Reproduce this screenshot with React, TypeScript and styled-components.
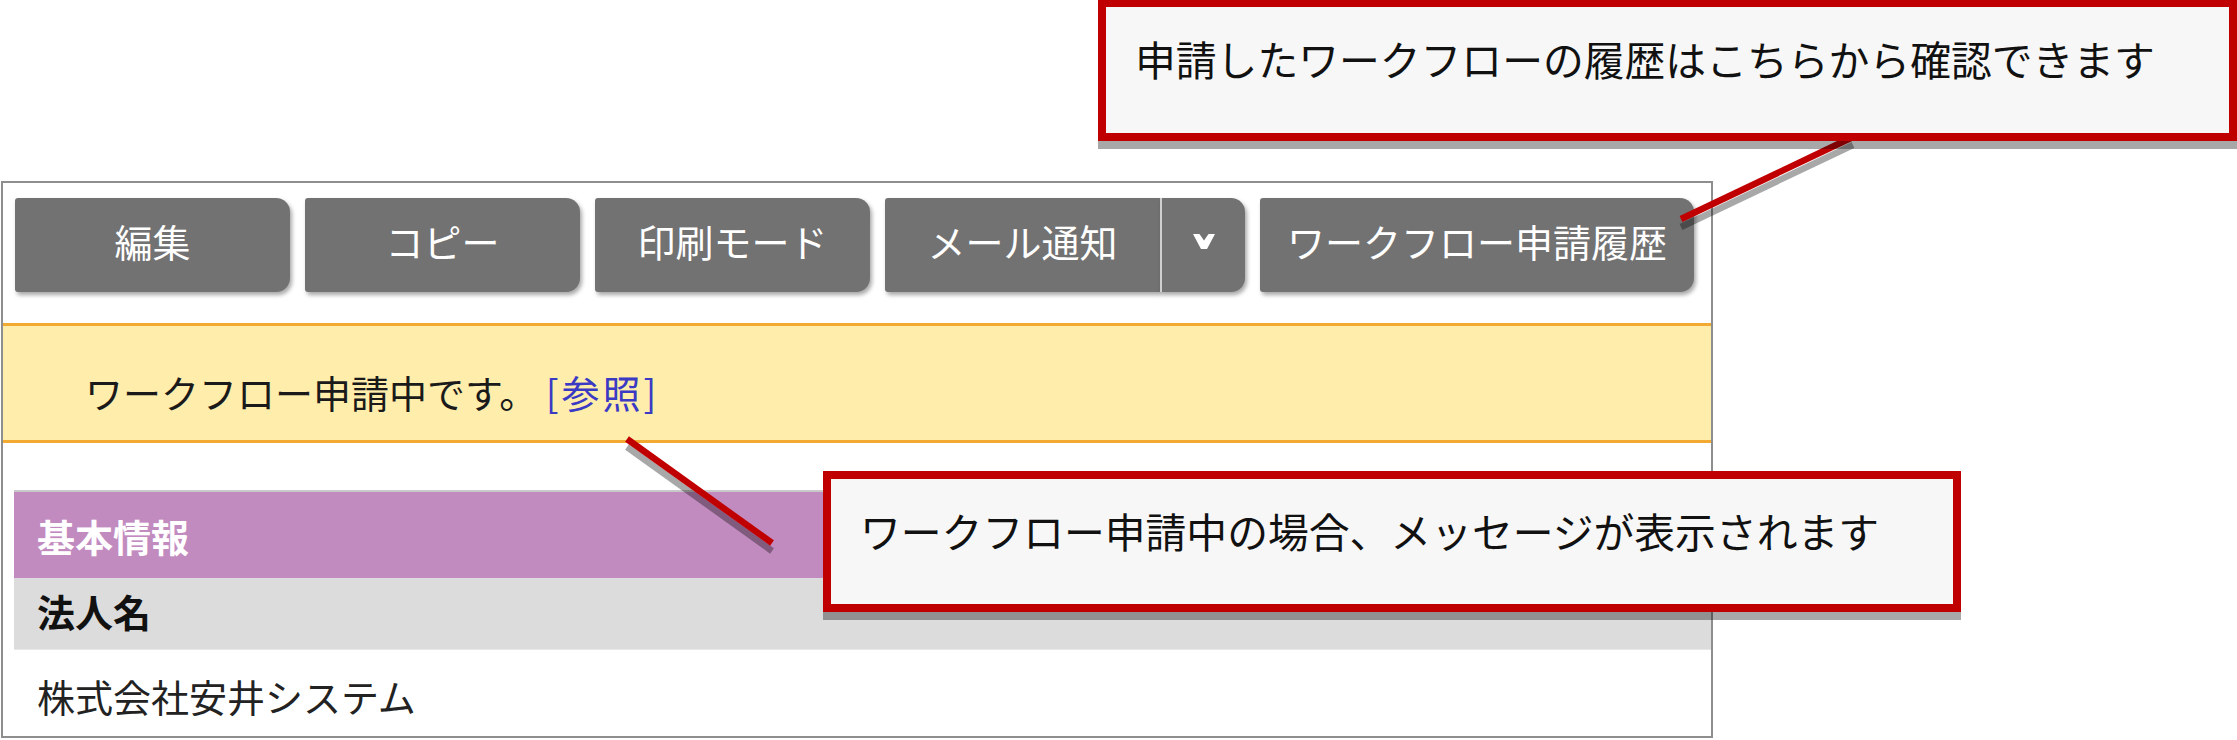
import React from "react";
import styled, { createGlobalStyle } from "styled-components";

const GlobalStyle = createGlobalStyle`
  html, body {
    margin: 0;
    padding: 0;
    background: #ffffff;
  }
  body {
    font-family: "Noto Sans CJK JP", "Noto Sans", sans-serif;
    color: #1a1a1a;
  }
`;

const Page = styled.div`
  position: relative;
  width: 2237px;
  height: 740px;
  overflow: hidden;
  padding: 181px 0 0 1px;
  box-sizing: border-box;
`;

const Frame = styled.div`
  width: 1708px;
  border: 2px solid #8e8e8e;
  background: #ffffff;
  display: flex;
  flex-direction: column;
`;

const Toolbar = styled.div`
  display: flex;
  flex-direction: row;
  gap: 15px;
  padding: 15px 0 31px 12px;
`;

const ButtonGroup = styled.div`
  display: flex;
  flex-direction: row;
`;

const ToolButton = styled.button<{ $joinRight?: boolean; $joinLeft?: boolean }>`
  height: 94px;
  min-width: ${(p) => (p.$joinLeft ? "85px" : "275px")};
  padding: ${(p) => (p.$joinLeft ? "0" : "0 27px")};
  border: none;
  ${(p) => p.$joinLeft && "border-left: 2px solid #cfcfcf;"}
  border-radius: ${(p) =>
    p.$joinRight ? "3px 0 0 3px" : p.$joinLeft ? "0 14px 14px 0" : "3px 14px 14px 3px"};
  background: #727272;
  box-shadow: 2px 3px 4px rgba(0, 0, 0, 0.35);
  color: #ffffff;
  font-family: "Noto Sans CJK JP", "Noto Sans", sans-serif;
  font-size: 38px;
  line-height: 1;
  padding-bottom: 8px;
  display: flex;
  align-items: center;
  justify-content: center;
  box-sizing: border-box;
  cursor: pointer;
`;

const Notice = styled.div`
  border-top: 3px solid #f2aa33;
  border-bottom: 3px solid #f2aa33;
  background: #ffedab;
  padding: 37px 0 20px 82px;
  font-size: 38px;
  line-height: 57px;
  color: #1a1a1a;
`;

const NoticeLink = styled.a`
  color: #3a3ac4;
  text-decoration: none;
  letter-spacing: 3px;
`;

const Table = styled.div`
  margin: 47px 0 0 11px;
  border-top: 2px solid #c9c9c9;
  display: flex;
  flex-direction: column;
`;

const SectionHeader = styled.div`
  height: 86px;
  background: #c28bbf;
  color: #ffffff;
  font-weight: 700;
  font-size: 38px;
  padding: 25px 0 0 23px;
  line-height: 1;
  box-sizing: border-box;
`;

const Row = styled.div<{ $label?: boolean }>`
  height: ${(p) => (p.$label ? "72px" : "86px")};
  background: ${(p) => (p.$label ? "#dcdcdc" : "#ffffff")};
  ${(p) => p.$label && "border-bottom: 1px solid #e8e8e8;"}
  font-weight: ${(p) => (p.$label ? 700 : 400)};
  color: ${(p) => (p.$label ? "#111111" : "#222222")};
  font-size: 38px;
  line-height: 1;
  padding: ${(p) => (p.$label ? "14px" : "27px")} 0 0 23px;
  box-sizing: border-box;
`;

const Callout = styled.div<{ $left: number; $top: number; $width: number; $height: number }>`
  position: absolute;
  left: ${(p) => p.$left}px;
  top: ${(p) => p.$top}px;
  width: ${(p) => p.$width}px;
  height: ${(p) => p.$height}px;
  box-sizing: border-box;
  background: #f7f7f7;
  border: 8px solid #c00000;
  box-shadow: 0 8px 0 rgba(0, 0, 0, 0.34);
  padding: 28px 0 0 29px;
  font-size: 40.8px;
  line-height: 48px;
  color: #111111;
  white-space: nowrap;
`;

const Leaders = styled.svg`
  position: absolute;
  left: 0;
  top: 0;
  pointer-events: none;
`;

const Chevron = () => (
  <svg width="22" height="15" viewBox="0 0 22 15">
    <polygon points="0,0 6.5,0 11,6.5 15.5,0 22,0 14,15 8,15" fill="#ffffff" />
  </svg>
);

const lines = [
  { x1: 1853, y1: 137, x2: 1681, y2: 219 },
  { x1: 627, y1: 439, x2: 772, y2: 543 },
];

const App = () => {
  return (
    <>
      <GlobalStyle />
      <Page>
        <Frame>
          <Toolbar>
            <ToolButton>編集</ToolButton>
            <ToolButton>コピー</ToolButton>
            <ToolButton>印刷モード</ToolButton>
            <ButtonGroup>
              <ToolButton $joinRight>メール通知</ToolButton>
              <ToolButton $joinLeft>
                <Chevron />
              </ToolButton>
            </ButtonGroup>
            <ToolButton>ワークフロー申請履歴</ToolButton>
          </Toolbar>
          <Notice>
            ワークフロー申請中です。 <NoticeLink href="#">[参照]</NoticeLink>
          </Notice>
          <Table>
            <SectionHeader>基本情報</SectionHeader>
            <Row $label>法人名</Row>
            <Row>株式会社安井システム</Row>
          </Table>
        </Frame>

        <Leaders width="2237" height="740" viewBox="0 0 2237 740">
          {lines.map((l, i) => (
            <g key={i}>
              <line
                x1={l.x1}
                y1={l.y1 + 8}
                x2={l.x2}
                y2={l.y2 + 8}
                stroke="rgba(0,0,0,0.34)"
                strokeWidth={6.5}
              />
              <line x1={l.x1} y1={l.y1} x2={l.x2} y2={l.y2} stroke="#c00000" strokeWidth={6.5} />
            </g>
          ))}
        </Leaders>

        <Callout $left={1098} $top={-1} $width={1139} $height={142}>
          申請したワークフローの履歴はこちらから確認できます
        </Callout>
        <Callout $left={823} $top={471} $width={1138} $height={141}>
          ワークフロー申請中の場合、メッセージが表示されます
        </Callout>
      </Page>
    </>
  );
};

export default App;
